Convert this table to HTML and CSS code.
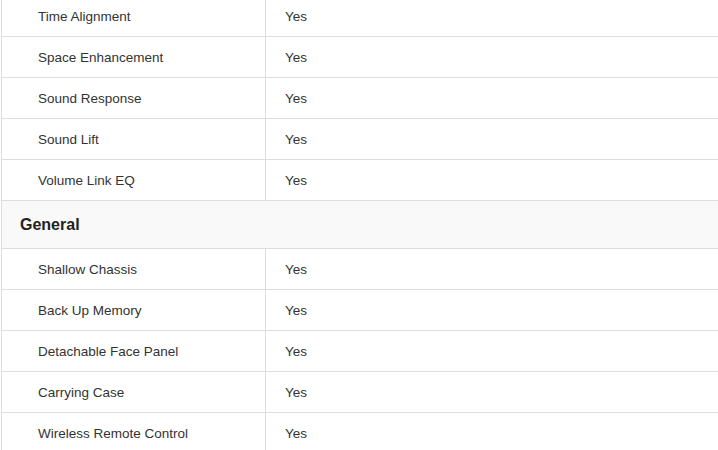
FILE: index.html
```html
<!DOCTYPE html>
<html>
<head>
<meta charset="utf-8">
<link rel="stylesheet" href="styles.css">
</head>
<body>
<div class="wrap">
<table class="specs">
<tbody>
<tr><td class="label">Time Alignment</td><td class="val">Yes</td></tr>
<tr><td class="label">Space Enhancement</td><td class="val">Yes</td></tr>
<tr><td class="label">Sound Response</td><td class="val">Yes</td></tr>
<tr><td class="label">Sound Lift</td><td class="val">Yes</td></tr>
<tr><td class="label">Volume Link EQ</td><td class="val">Yes</td></tr>
<tr class="group"><th colspan="2">General</th></tr>
<tr><td class="label">Shallow Chassis</td><td class="val">Yes</td></tr>
<tr><td class="label">Back Up Memory</td><td class="val">Yes</td></tr>
<tr><td class="label">Detachable Face Panel</td><td class="val">Yes</td></tr>
<tr><td class="label">Carrying Case</td><td class="val">Yes</td></tr>
<tr><td class="label">Wireless Remote Control</td><td class="val">Yes</td></tr>
</tbody>
</table>
</div>
</body>
</html>
```
FILE: styles.css
```css
html, body {
  margin: 0;
  padding: 0;
  background: #fff;
  overflow: hidden;
}
.wrap {
  margin-top: -5px;
  padding-left: 1px;
}
.specs {
  border-collapse: collapse;
  width: 740px;
  font-family: "Liberation Sans", Arial, sans-serif;
  font-size: 13.5px;
  color: #333;
}
.specs td {
  border: 1px solid #ddd;
  height: 41px;
  padding: 0;
  box-sizing: border-box;
  vertical-align: middle;
}
.specs td.label {
  width: 264px;
  padding-left: 36px;
}
.specs td.val {
  padding-left: 19px;
}
.specs .group th {
  border: 1px solid #ddd;
  background: #f9f9f9;
  height: 48px;
  box-sizing: border-box;
  text-align: left;
  padding: 0 0 0 18px;
  font-size: 16px;
  font-weight: bold;
  color: #222;
}
```
